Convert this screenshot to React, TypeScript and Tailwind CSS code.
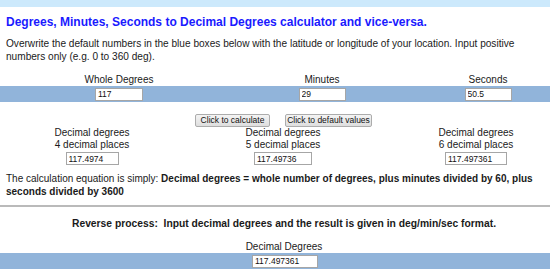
import React from "react";

const inputCls =
  "h-[13px] border border-[#a6a6a6] bg-white px-[2px] text-[8.5px] leading-[11px] text-[#111] outline-none";

function Field({ value, w }: { value: string; w: string }) {
  return <input readOnly value={value} className={`${inputCls} ${w}`} />;
}

export default function App() {
  return (
    <div className="w-[550px] h-[270px] overflow-hidden bg-white text-[#1a1a1a] font-['Liberation_Sans',Arial,sans-serif] text-[10px]">
      <div className="h-[7px] bg-[#cce9fc]" />
      <h1 className="mt-[8px] ml-[6px] text-[12px] leading-[14px] font-bold text-[#1a1aff] whitespace-nowrap">
        Degrees, Minutes, Seconds to Decimal Degrees calculator and vice-versa.
      </h1>
      <p className="mt-[8px] px-[6px] text-[10.1px] leading-[13px] whitespace-nowrap">
        Overwrite the default numbers in the blue boxes below with the latitude or longitude of your location. Input positive
        <br />
        numbers only (e.g. 0 to 360 deg).
      </p>

      {/* labels row */}
      <div className="mt-[11px] flex h-[12px] leading-[12px]">
        <div className="ml-[59px] w-[120px] text-center">Whole Degrees</div>
        <div className="ml-[83px] w-[120px] text-center">Minutes</div>
        <div className="ml-[46px] w-[120px] text-center">Seconds</div>
      </div>
      <div className="flex h-[16px] items-center bg-[#91b4da]">
        <div className="ml-[59px] w-[120px] flex justify-center">
          <Field value="117" w="w-[48px]" />
        </div>
        <div className="ml-[83px] w-[120px] flex justify-center">
          <Field value="29" w="w-[47px]" />
        </div>
        <div className="ml-[46px] w-[120px] flex justify-center">
          <Field value="50.5" w="w-[47px]" />
        </div>
      </div>

      {/* buttons */}
      <div className="mt-[12px] ml-[195px] flex gap-[15px]">
        <button className="h-[13px] w-[75px] rounded-[2px] border border-[#acacac] bg-gradient-to-b from-[#f4f4f4] to-[#dedede] text-[8.5px] leading-[11px] text-[#111]">
          Click to calculate
        </button>
        <button className="h-[13px] w-[87px] rounded-[2px] border border-[#acacac] bg-gradient-to-b from-[#f4f4f4] to-[#dedede] text-[8.5px] leading-[11px] text-[#111]">
          Click to default values
        </button>
      </div>

      {/* decimal row */}
      <div className="flex leading-[12px]">
        <div className="ml-[32px] w-[120px] flex flex-col items-center">
          <div>Decimal degrees</div>
          <div>4 decimal places</div>
          <div className="mt-[1px]">
            <Field value="117.4974" w="w-[53px]" />
          </div>
        </div>
        <div className="ml-[71px] w-[120px] flex flex-col items-center">
          <div>Decimal degrees</div>
          <div>5 decimal places</div>
          <div className="mt-[1px]">
            <Field value="117.49736" w="w-[58px]" />
          </div>
        </div>
        <div className="ml-[73px] w-[120px] flex flex-col items-center">
          <div>Decimal degrees</div>
          <div>6 decimal places</div>
          <div className="mt-[1px]">
            <Field value="117.497361" w="w-[62px]" />
          </div>
        </div>
      </div>

      <p className="mt-[7px] px-[6px] leading-[13px] whitespace-nowrap">
        The calculation equation is simply:{" "}
        <b>Decimal degrees = whole number of degrees, plus minutes divided by 60, plus</b>
        <br />
        <b>seconds divided by 3600</b>
      </p>

      <div className="mt-[7px] h-[2px] bg-[#bababa]" />

      <div className="mt-[11px] pl-[18px] text-center text-[10.3px] font-bold leading-[12px] whitespace-nowrap">
        Reverse process:&nbsp; Input decimal degrees and the result is given in deg/min/sec format.
      </div>

      <div className="mt-[11px] pl-[18px] text-center leading-[12px]">Decimal Degrees</div>
      <div className="flex h-[16px] items-center justify-center bg-[#91b4da] pl-[20px]">
        <Field value="117.497361" w="w-[66px]" />
      </div>
    </div>
  );
}
